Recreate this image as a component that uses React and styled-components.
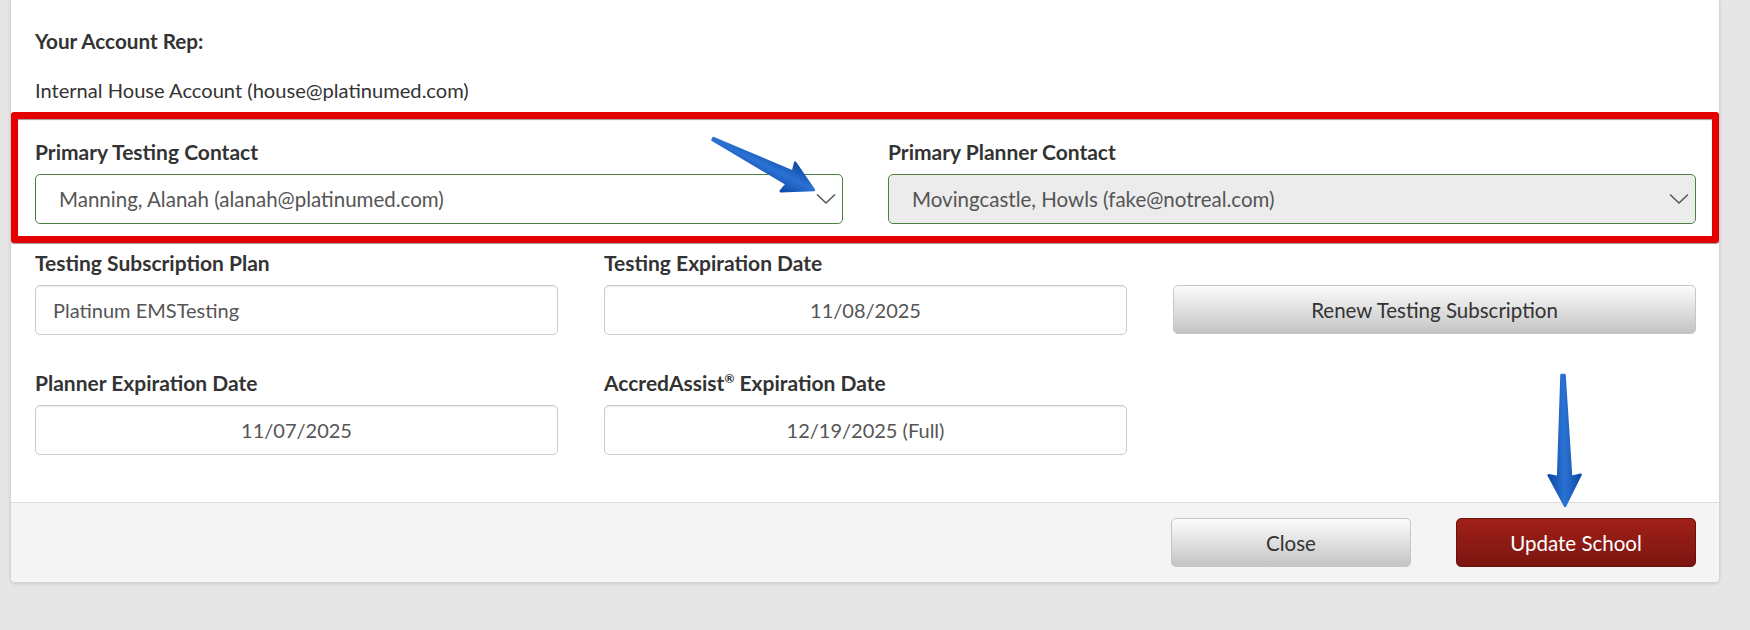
import React from 'react';
import styled, { createGlobalStyle } from 'styled-components';

const GlobalStyle = createGlobalStyle`
  html, body {
    margin: 0;
    padding: 0;
    background: #e6e6e6;
  }
  body {
    font-family: Lato, 'Liberation Sans', sans-serif;
    color: #333;
  }
  * {
    box-sizing: border-box;
  }
`

const Page = styled.div`
  position: relative;
  height: 630px;
  padding-left: 10px;
  overflow: hidden;
`

const Card = styled.div`
  width: 1710px;
  background: #fff;
  border: 1px solid #d4d4d4;
  border-top: none;
  border-radius: 0 0 5px 5px;
  box-shadow: 0 1px 3px rgba(0, 0, 0, 0.12);
`

const Body = styled.div`
  padding: 27px 23px 47px 24px;
`

const Heading = styled.div`
  font-size: 20.7px;
  line-height: 28px;
  font-weight: 700;
`

const Text = styled.div`
  font-size: 20.1px;
  line-height: 28px;
  margin-top: 21px;
`

const Highlight = styled.div`
  margin: 8px -23px 6px -24px;
  padding: 19px 16px 12px 17px;
  border: 7px solid #e40000;
  border-radius: 3px;
  box-shadow: 0 1px 1px rgba(0, 0, 0, 0.4), inset 0 1px 1px rgba(0, 0, 0, 0.4);
`

const Grid = styled.div`
  display: grid;
  grid-template-columns: repeat(${p => p.$cols}, 1fr);
  column-gap: ${p => p.$gap}px;
  row-gap: 34px;
`

const Field = styled.div`
  display: flex;
  flex-direction: column;
`

const Label = styled.label`
  font-size: 21px;
  line-height: 28px;
  font-weight: 700;
  margin-bottom: 8px;
  min-height: 28px;

  sup {
    font-size: 12px;
    line-height: 0;
  }
`

const Select = styled.div`
  height: 50px;
  display: flex;
  align-items: center;
  justify-content: space-between;
  padding: 0 6px 0 23px;
  border: 1px solid #4e7f42;
  border-radius: 5px;
  background: ${p => (p.$disabled ? '#ececec' : '#fff')};
  color: #555;
  font-size: 20.5px;
`

const Input = styled.div`
  height: 50px;
  display: flex;
  align-items: center;
  justify-content: ${p => (p.$center ? 'center' : 'flex-start')};
  padding: 0 17px;
  border: 1px solid #ccc;
  border-radius: 5px;
  background: #fff;
  box-shadow: inset 0 1px 1px rgba(0, 0, 0, 0.075);
  color: #555;
  font-size: 20px;
`

const Button = styled.button`
  height: ${p => p.$h || 50}px;
  width: ${p => (p.$w ? `${p.$w}px` : '100%')};
  border-radius: 5px;
  font-family: inherit;
  font-size: 20.5px;
  cursor: pointer;
  border: 1px solid ${p => (p.$primary ? '#6b120d' : '#c6c6c6')};
  color: ${p => (p.$primary ? '#fff' : '#333')};
  background: ${p =>
    p.$primary
      ? 'linear-gradient(#a11f18, #7a1610)'
      : 'linear-gradient(#fcfcfc, #c4c4c4)'};
`

const Footer = styled.div`
  display: flex;
  justify-content: flex-end;
  gap: 45px;
  padding: 15px 23px 15px;
  background: #f4f4f4;
  border-top: 1px solid #dcdcdc;
  border-radius: 0 0 5px 5px;
`

const Overlay = styled.svg`
  position: absolute;
  left: 0;
  top: 0;
  pointer-events: none;
`

function Chevron() {
  return (
    <svg width="20" height="12" viewBox="0 0 20 12">
      <polyline points="1,1.5 10,10 19,1.5" fill="none" stroke="#555" strokeWidth="1.5" />
    </svg>
  )
}

function Arrow({ x, y, angle, len, head, wing, shaft, tail }) {
  const d = `M0,${-tail} L${head},${-shaft} L${head - 2},${-wing} L${len},0 L${head - 2},${wing} L${head},${shaft} L0,${tail} Z`
  return (
    <g transform={`translate(${x} ${y}) rotate(${angle})`}>
      <path d={d} fill="url(#blue)" stroke="url(#blue)" strokeWidth="2.5" strokeLinejoin="round" />
    </g>
  )
}

export default function App() {
  return (
    <>
      <GlobalStyle />
      <Page>
        <Card>
          <Body>
            <Heading>Your Account Rep:</Heading>
            <Text>Internal House Account (house@platinumed.com)</Text>

            <Highlight>
              <Grid $cols={2} $gap={45}>
                <Field>
                  <Label>Primary Testing Contact</Label>
                  <Select>
                    <span>Manning, Alanah (alanah@platinumed.com)</span>
                    <Chevron />
                  </Select>
                </Field>
                <Field>
                  <Label>Primary Planner Contact</Label>
                  <Select $disabled>
                    <span>Movingcastle, Howls (fake@notreal.com)</span>
                    <Chevron />
                  </Select>
                </Field>
              </Grid>
            </Highlight>

            <Grid $cols={3} $gap={46}>
              <Field>
                <Label>Testing Subscription Plan</Label>
                <Input>Platinum EMSTesting</Input>
              </Field>
              <Field>
                <Label>Testing Expiration Date</Label>
                <Input $center>11/08/2025</Input>
              </Field>
              <Field>
                <Label />
                <Button $h={49}>Renew Testing Subscription</Button>
              </Field>
              <Field>
                <Label>Planner Expiration Date</Label>
                <Input $center>11/07/2025</Input>
              </Field>
              <Field>
                <Label>AccredAssist<sup>®</sup> Expiration Date</Label>
                <Input $center>12/19/2025 (Full)</Input>
              </Field>
            </Grid>
          </Body>
          <Footer>
            <Button $w={240} $h={49}>Close</Button>
            <Button $w={240} $h={49} $primary>Update School</Button>
          </Footer>
        </Card>

        <Overlay width="1750" height="630">
          <defs>
            <linearGradient id="blue" x1="0" y1="0" x2="0" y2="1">
              <stop offset="0" stopColor="#0f4aa6" />
              <stop offset="0.5" stopColor="#2a72d4" />
              <stop offset="1" stopColor="#0f4aa6" />
            </linearGradient>
          </defs>
          <Arrow x={713} y={139} angle={26.8} len={113} head={86} wing={16} shaft={7} tail={1} />
          <Arrow x={1563} y={375} angle={89.1} len={131} head={102} wing={16} shaft={6.5} tail={1.5} />
        </Overlay>
      </Page>
    </>
  )
}
